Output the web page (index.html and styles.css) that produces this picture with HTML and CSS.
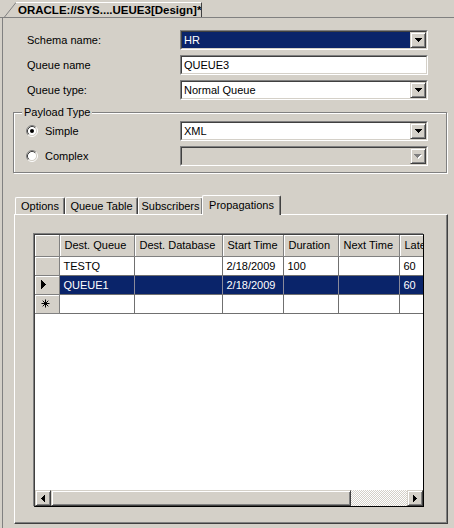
FILE: index.html
```html
<!DOCTYPE html>
<html>
<head>
<meta charset="utf-8">
<link rel="stylesheet" href="styles.css">
</head>
<body>
<div class="doctabs">
  <div class="doctab">
    <svg class="slant" width="12" height="15" viewBox="0 0 12 15"><polygon points="0,15 12,0 12,15" fill="#d4d0c8"/><line x1="0.5" y1="15" x2="12" y2="0.5" stroke="#808080" stroke-width="1"/></svg>
    <div class="doctab-label">ORACLE://SYS....UEUE3[Design]*</div>
  </div>
</div>
<div class="doc">
  <div class="form">
    <div class="row">
      <div class="label">Schema name:</div>
      <div class="combo">
        <div class="combo-inner">
          <div class="combo-text selected">HR</div>
          <div class="combo-btn"><svg width="7" height="4" viewBox="0 0 7 4" shape-rendering="crispEdges"><path d="M0 0h7v1h-1v1h-1v1h-1v1h-1v-1h-1v-1h-1v-1h-1z" fill="#000"/></svg></div>
        </div>
      </div>
    </div>
    <div class="row">
      <div class="label">Queue name</div>
      <div class="combo">
        <div class="combo-inner">
          <div class="combo-text">QUEUE3</div>
        </div>
      </div>
    </div>
    <div class="row">
      <div class="label">Queue type:</div>
      <div class="combo">
        <div class="combo-inner">
          <div class="combo-text">Normal Queue</div>
          <div class="combo-btn"><svg width="7" height="4" viewBox="0 0 7 4" shape-rendering="crispEdges"><path d="M0 0h7v1h-1v1h-1v1h-1v1h-1v-1h-1v-1h-1v-1h-1z" fill="#000"/></svg></div>
        </div>
      </div>
    </div>
  </div>

  <div class="group">
    <div class="legend">Payload Type</div>
    <div class="grow first">
      <div class="radio-label">
        <svg class="radio" width="12" height="12" viewBox="0 0 12 12"><circle cx="6" cy="6" r="4.5" fill="#fff"/><path d="M2.11 9.89A5.5 5.5 0 0 1 9.89 2.11" fill="none" stroke="#808080"/><path d="M9.89 2.11A5.5 5.5 0 0 1 2.11 9.89" fill="none" stroke="#fff"/><path d="M2.82 9.18A4.5 4.5 0 0 1 9.18 2.82" fill="none" stroke="#404040"/><path d="M9.18 2.82A4.5 4.5 0 0 1 2.82 9.18" fill="none" stroke="#d4d0c8"/><circle cx="6" cy="6" r="2" fill="#000"/></svg>
        <span>Simple</span>
      </div>
      <div class="combo">
        <div class="combo-inner">
          <div class="combo-text">XML</div>
          <div class="combo-btn"><svg width="7" height="4" viewBox="0 0 7 4" shape-rendering="crispEdges"><path d="M0 0h7v1h-1v1h-1v1h-1v1h-1v-1h-1v-1h-1v-1h-1z" fill="#000"/></svg></div>
        </div>
      </div>
    </div>
    <div class="grow">
      <div class="radio-label">
        <svg class="radio" width="12" height="12" viewBox="0 0 12 12"><circle cx="6" cy="6" r="4.5" fill="#fff"/><path d="M2.11 9.89A5.5 5.5 0 0 1 9.89 2.11" fill="none" stroke="#808080"/><path d="M9.89 2.11A5.5 5.5 0 0 1 2.11 9.89" fill="none" stroke="#fff"/><path d="M2.82 9.18A4.5 4.5 0 0 1 9.18 2.82" fill="none" stroke="#404040"/><path d="M9.18 2.82A4.5 4.5 0 0 1 2.82 9.18" fill="none" stroke="#d4d0c8"/></svg>
        <span>Complex</span>
      </div>
      <div class="combo">
        <div class="combo-inner disabled">
          <div class="combo-text"></div>
          <div class="combo-btn"><svg width="8" height="5" viewBox="0 0 8 5" shape-rendering="crispEdges"><path transform="translate(1,1)" d="M0 0h7v1h-1v1h-1v1h-1v1h-1v-1h-1v-1h-1v-1h-1z" fill="#fff"/><path d="M0 0h7v1h-1v1h-1v1h-1v1h-1v-1h-1v-1h-1v-1h-1z" fill="#808080"/></svg></div>
        </div>
      </div>
    </div>
  </div>

  <div class="tabstrip">
    <div class="tab t-options">Options</div>
    <div class="tab t-qt">Queue Table</div>
    <div class="tab t-sub">Subscribers</div>
    <div class="tab t-prop active">Propagations</div>
  </div>
  <div class="tabpage">
    <div class="grid">
      <div class="grid-body">
        <table class="dg">
          <colgroup>
            <col style="width:24px"><col style="width:75px"><col style="width:88px"><col style="width:61px"><col style="width:55px"><col style="width:61px"><col style="width:60px">
          </colgroup>
          <thead>
            <tr>
              <th class="rh"></th>
              <th>Dest. Queue</th>
              <th>Dest. Database</th>
              <th>Start Time</th>
              <th>Duration</th>
              <th>Next Time</th>
              <th>Latency</th>
            </tr>
          </thead>
          <tbody>
            <tr>
              <td class="rh"></td>
              <td>TESTQ</td>
              <td></td>
              <td>2/18/2009</td>
              <td>100</td>
              <td></td>
              <td>60</td>
            </tr>
            <tr class="sel">
              <td class="rh"><svg width="5" height="9" viewBox="0 0 5 9" shape-rendering="crispEdges"><path d="M0 0h1v1h1v1h1v1h1v1h1v1h-1v1h-1v1h-1v1h-1v1h-1z" fill="#000"/></svg></td>
              <td>QUEUE1</td>
              <td></td>
              <td>2/18/2009</td>
              <td></td>
              <td></td>
              <td>60</td>
            </tr>
            <tr>
              <td class="rh"><svg width="9" height="9" viewBox="0 0 9 9"><path d="M4.5 0.5V8.5M0.5 4.5H8.5M1.7 1.7L7.3 7.3M7.3 1.7L1.7 7.3" stroke="#000" stroke-width="1" fill="none"/></svg></td>
              <td></td>
              <td></td>
              <td></td>
              <td></td>
              <td></td>
              <td></td>
            </tr>
          </tbody>
        </table>
      </div>
      <div class="hscroll">
        <div class="sbtn"><svg width="4" height="7" viewBox="0 0 4 7" shape-rendering="crispEdges"><path d="M3 0h1v7h-1v-1h-1v-1h-1v-1h-1v-1h1v-1h1v-1h1z" fill="#000"/></svg></div>
        <div class="thumb"></div>
        <div class="track"></div>
        <div class="sbtn"><svg width="4" height="7" viewBox="0 0 4 7" shape-rendering="crispEdges"><path d="M0 0h1v1h1v1h1v1h1v1h-1v1h-1v1h-1v1h-1z" fill="#000"/></svg></div>
      </div>
    </div>
  </div>
</div>
</body>
</html>
```
FILE: styles.css
```css
* { box-sizing: border-box; }
html, body { margin: 0; padding: 0; }
body {
  width: 454px;
  height: 528px;
  overflow: hidden;
  background: #d4d0c8;
  font-family: "Liberation Sans", Arial, sans-serif;
  font-size: 11px;
  color: #000;
}

/* document tab */
.doctabs {
  height: 18px;
  border-bottom: 1px solid #808080;
  display: flex;
  align-items: flex-end;
}
.doctab {
  display: flex;
  margin-left: 4px;
  height: 15px;
}
.slant { display: block; }
.doctab-label {
  width: 186px;
  height: 15px;
  border-top: 1px solid #fff;
  border-right: 1px solid #404040;
  padding-left: 2px;
  font-weight: bold;
  font-size: 11.5px;
  line-height: 14px;
  white-space: nowrap;
  overflow: hidden;
}

.doc {
  margin-left: 2px;
  border-left: 1px solid #808080;
  height: 510px;
}

/* form */
.form { padding-top: 12px; }
.row {
  display: flex;
  align-items: center;
  height: 20px;
  margin-bottom: 5px;
}
.row:last-child { margin-bottom: 0; }
.label {
  width: 177px;
  padding-left: 24px;
}

.combo {
  display: flex;
  width: 248px;
  height: 20px;
  border: 1px solid;
  border-color: #808080 #fff #fff #808080;
}
.combo-inner {
  flex: 1;
  display: flex;
  border: 1px solid;
  border-color: #404040 #d4d0c8 #d4d0c8 #404040;
  background: #fff;
}
.combo-inner.disabled { background: #d4d0c8; }
.combo-text {
  flex: 1;
  padding-left: 2px;
  line-height: 16px;
  white-space: nowrap;
}
.combo-text.selected {
  background: #0a246a;
  color: #fff;
}
.combo-btn {
  width: 16px;
  height: 16px;
  border: 1px solid;
  border-color: #d4d0c8 #404040 #404040 #d4d0c8;
  box-shadow: inset 1px 1px #fff, inset -1px -1px #808080;
  background: #d4d0c8;
  display: flex;
  align-items: center;
  justify-content: center;
}
.combo-btn svg { display: block; }

/* group box */
.group {
  margin: 12px 0 0 10px;
  width: 434px;
  border: 1px solid #808080;
  box-shadow: inset 1px 1px #fff, 1px 1px #fff;
  padding-bottom: 6px;
}
.legend {
  display: block;
  width: max-content;
  height: 13px;
  margin: -7px 0 0 8px;
  padding: 0 2px;
  background: #d4d0c8;
  line-height: 13px;
}
.grow {
  display: flex;
  align-items: center;
  height: 20px;
  margin-top: 5px;
}
.grow.first { margin-top: 2px; }
.radio-label {
  width: 166px;
  display: flex;
  align-items: center;
  padding-left: 12px;
  gap: 7px;
}
.radio { display: block; }

/* tabs */
.tabstrip {
  margin: 22px 0 0 11px;
  height: 19px;
  display: flex;
  align-items: flex-end;
}
.tab {
  height: 17px;
  border-top: 1px solid #fff;
  border-left: 1px solid #fff;
  border-right: 1px solid #404040;
  box-shadow: inset -1px 0 #808080;
  border-radius: 2px 2px 0 0;
  text-align: center;
  line-height: 16px;
  white-space: nowrap;
}
.t-options { width: 50px; margin-left: 1px; }
.t-qt { width: 73px; }
.t-sub { width: 65px; }
.t-prop { width: 79px; margin-left: -1px; }
.tab.active {
  height: 20px;
  margin-bottom: -1px;
  background: #d4d0c8;
  position: relative;
  z-index: 1;
  line-height: 18px;
}

.tabpage {
  margin-left: 11px;
  width: 434px;
  height: 310px;
  border: 1px solid;
  border-color: #fff #404040 #404040 #fff;
  box-shadow: inset -1px -1px #808080;
  padding: 18px 0 0 18px;
}

/* data grid */
.grid {
  width: 390px;
  height: 273px;
  border: 1px solid #000;
  border-top-color: #404040;
  border-left-color: #404040;
  box-shadow: -1px -1px 0 #808080;
  margin: 1px 0 0 1px;
  display: flex;
  flex-direction: column;
  background: #fff;
}
.grid-body {
  flex: 1;
  overflow: hidden;
}
.dg {
  table-layout: fixed;
  width: 424px;
  border-collapse: collapse;
  border-spacing: 0;
}
.dg th, .dg td {
  padding: 0 0 0 4px;
  text-align: left;
  font-weight: normal;
  white-space: nowrap;
  overflow: hidden;
  border-right: 1px solid #707070;
  border-bottom: 1px solid #707070;
}
.dg th {
  height: 21px;
  padding-left: 5px;
  background: #d4d0c8;
  box-shadow: inset 1px 1px #fff;
  border-color: #808080;
}
.dg td { height: 19px; }
.dg .rh {
  background: #d4d0c8;
  box-shadow: inset 1px 1px #fff;
  border-right-color: #808080;
  border-bottom-color: #808080;
  padding: 0 0 0 6px;
}
.dg td.rh svg { display: block; }
.dg tr.sel td { background: #0a246a; color: #fff; border-right-color: #8a8a9a; }
.dg tr.sel td.rh { background: #d4d0c8; color: #000; border-right-color: #808080; }

.hscroll {
  height: 16px;
  display: flex;
}
.sbtn, .thumb {
  height: 16px;
  border: 1px solid;
  border-color: #d4d0c8 #404040 #404040 #d4d0c8;
  box-shadow: inset 1px 1px #fff, inset -1px -1px #808080;
  background: #d4d0c8;
}
.sbtn {
  width: 16px;
  display: flex;
  align-items: center;
  justify-content: center;
}
.sbtn svg { display: block; }
.thumb { width: 300px; }
.track {
  flex: 1;
  background: repeating-conic-gradient(#fff 0 25%, #d4d0c8 0 50%) 0 0 / 2px 2px;
}
```
